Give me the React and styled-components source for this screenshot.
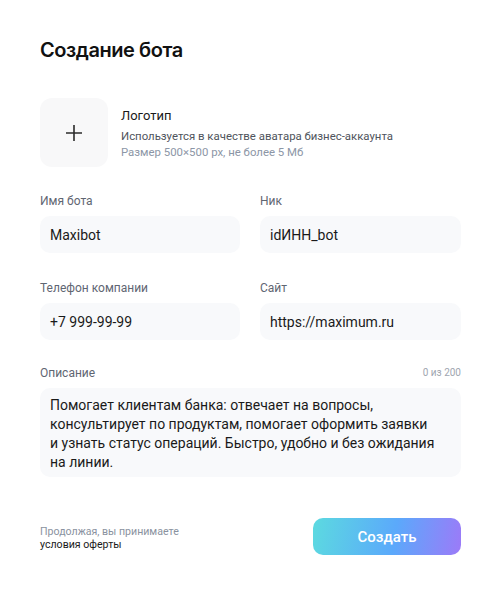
import React from 'react'
import styled, { createGlobalStyle } from 'styled-components'

const GlobalStyle = createGlobalStyle`
  html, body {
    margin: 0;
    padding: 0;
    background: #ffffff;
  }
  body {
    font-family: Roboto, "Liberation Sans", sans-serif;
    color: #1a1a1a;
  }
`

const Page = styled.div`
  width: 500px;
  height: 594px;
  box-sizing: border-box;
  padding: 38px 39px 0 40px;
  display: flex;
  flex-direction: column;
`

const Title = styled.h1`
  margin: 0;
  font-family: Inter, "Noto Sans", sans-serif;
  font-weight: 600;
  font-size: 20px;
  line-height: 24px;
  letter-spacing: -0.45px;
  color: #111;
`

const LogoRow = styled.div`
  display: flex;
  gap: 13px;
  margin-top: 36px;
`

const LogoBox = styled.div`
  width: 68px;
  height: 69px;
  border-radius: 12px;
  background: #f8f8f9;
  display: flex;
  align-items: center;
  justify-content: center;
`

const LogoText = styled.div`
  display: flex;
  flex-direction: column;
  padding-top: 10px;
`

const LogoTitle = styled.div`
  font-size: 13px;
  line-height: 16px;
  color: #1a1a1a;
  margin-bottom: 5px;
`

const LogoHint = styled.div`
  font-size: 11.4px;
  line-height: 15.5px;
  color: ${p => (p.$muted ? '#8c96a6' : '#4f545c')};
`

const Grid = styled.div`
  display: grid;
  grid-template-columns: 200px 201px;
  column-gap: 20px;
  row-gap: 27px;
  margin-top: 26px;
`

const Field = styled.div`
  display: flex;
  flex-direction: column;
`

const LabelRow = styled.div`
  display: flex;
  justify-content: space-between;
  align-items: center;
  height: 16px;
  margin-bottom: 7px;
`

const Label = styled.span`
  font-size: 12px;
  line-height: 16px;
  color: #5f6672;
`

const Counter = styled.span`
  font-size: 10px;
  line-height: 16px;
  color: #a0a6b0;
`

const Input = styled.div`
  height: 37px;
  border-radius: 10px;
  background: #f8f9fb;
  padding: 0 10px;
  display: flex;
  align-items: center;
  font-size: 14px;
  color: #1a1a1a;
`

const Area = styled.div`
  height: 89px;
  box-sizing: border-box;
  border-radius: 10px;
  background: #f8f9fb;
  padding: 8px 10px;
  font-size: 14px;
  line-height: 19px;
  color: #1a1a1a;
`

const Description = styled(Field)`
  margin-top: 25px;
`

const Footer = styled.div`
  display: flex;
  justify-content: space-between;
  align-items: center;
  margin-top: 41px;
`

const Terms = styled.div`
  font-size: 10.6px;
  line-height: 13px;
  color: #8a92a0;
  padding-top: 3px;
`

const TermsLink = styled.div`
  color: #1a1a1a;
`

const Button = styled.button`
  width: 148px;
  height: 37px;
  border: none;
  border-radius: 10px;
  background: linear-gradient(100deg, #5cdae0 0%, #5ba9fb 55%, #9c7af8 100%);
  color: #fff;
  font-family: Roboto, "Liberation Sans", sans-serif;
  font-size: 15px;
  font-weight: 500;
  cursor: pointer;
`

const PlusIcon = () => (
  <svg width="18" height="18" viewBox="0 0 18 18">
    <path d="M9 1v16M1 9h16" stroke="#2b2b2b" strokeWidth="1.6" fill="none" />
  </svg>
)

const fields = [
  { label: 'Имя бота', value: 'Maxibot' },
  { label: 'Ник', value: 'idИНН_bot' },
  { label: 'Телефон компании', value: '+7 999-99-99' },
  { label: 'Сайт', value: 'https://maximum.ru' },
]

export default function App() {
  return (
    <>
      <GlobalStyle />
      <Page>
        <Title>Создание бота</Title>

        <LogoRow>
          <LogoBox>
            <PlusIcon />
          </LogoBox>
          <LogoText>
            <LogoTitle>Логотип</LogoTitle>
            <LogoHint>Используется в качестве аватара бизнес-аккаунта</LogoHint>
            <LogoHint $muted>Размер 500×500 px, не более 5 Мб</LogoHint>
          </LogoText>
        </LogoRow>

        <Grid>
          {fields.map(f => (
            <Field key={f.label}>
              <LabelRow>
                <Label>{f.label}</Label>
              </LabelRow>
              <Input>{f.value}</Input>
            </Field>
          ))}
        </Grid>

        <Description>
          <LabelRow>
            <Label>Описание</Label>
            <Counter>0 из 200</Counter>
          </LabelRow>
          <Area>
            Помогает клиентам банка: отвечает на вопросы,
            <br />
            консультирует по продуктам, помогает оформить заявки
            <br />
            и узнать статус операций. Быстро, удобно и без ожидания
            <br />
            на линии.
          </Area>
        </Description>

        <Footer>
          <Terms>
            Продолжая, вы принимаете
            <TermsLink>условия оферты</TermsLink>
          </Terms>
          <Button>Создать</Button>
        </Footer>
      </Page>
    </>
  )
}
